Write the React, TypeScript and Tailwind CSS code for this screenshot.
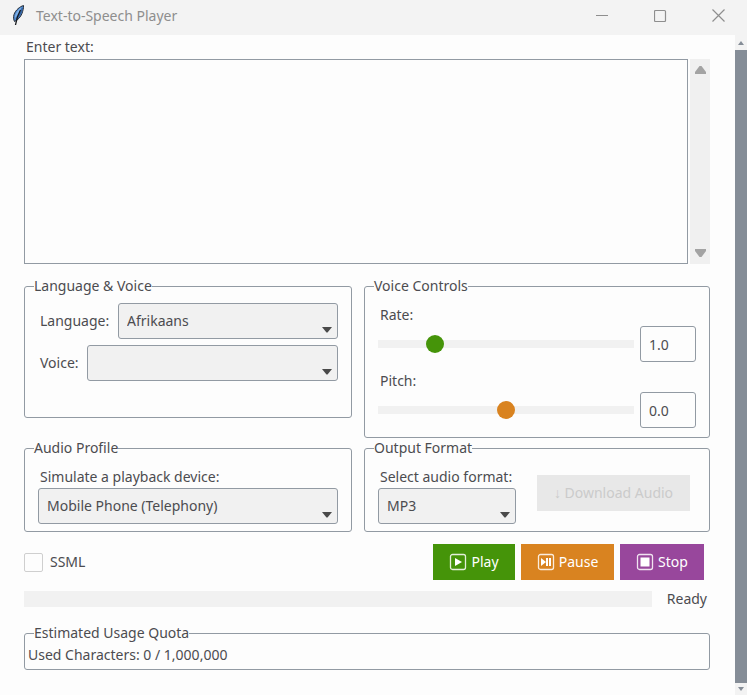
import React, { useState } from "react";

const FEATHER_VANE = "M11.500 0.500C8 1.500 3.500 5 2 9.500C1.200 12 1.500 14.500 2.500 16.500C6 15 8.500 12 10 8.500C11 5.500 11.700 3 11.500 0.500Z";

function Feather() {
  return (
    <svg width="13" height="21" viewBox="0 0 13 21" aria-hidden="true">
      <path d={FEATHER_VANE} fill="#4d86c9" stroke="#2a2f38" strokeWidth="1" />
      <path d="M9.500 2C6 4.500 4 7.500 3 11L3.500 13C5.500 9.500 8 6 9.500 2Z" fill="#7fb2ea" />
      <path d="M10.500 3C9.500 7 7.500 11 4.500 14.500" fill="none" stroke="#2f5f9f" strokeWidth="1.200" />
      <path d="M8.500 5C6.500 8.500 4.500 13 3.500 20" fill="none" stroke="#15181c" strokeWidth="1.300" />
    </svg>
  );
}

function Panel({ title, className = "", children }: { title: string; className?: string; children: React.ReactNode }) {
  return (
    <fieldset className={`min-w-0 rounded-[3px] border border-[#929aa3] px-[9px] ${className}`}>
      <legend className="h-5 leading-5">{title}</legend>
      {children}
    </fieldset>
  );
}

function Dropdown({ id, options, className = "" }: { id: string; options: string[]; className?: string }) {
  return (
    <div className={`relative ${className}`}>
      <select
        id={id}
        className="block h-9 w-full appearance-none rounded-[3px] border border-[#929aa3] bg-[#f1f1f1] pr-6 pl-2 outline-none"
      >
        {options.map((o) => (
          <option key={o}>{o}</option>
        ))}
      </select>
      <svg className="pointer-events-none absolute right-1.5 bottom-1.5" width="10" height="6" viewBox="0 0 10 6" aria-hidden="true">
        <path d="M0 0H10L5.500 5.500H4.500Z" fill="#4a4a4a" />
      </svg>
    </div>
  );
}

const TRACK =
  "h-[18px] min-w-0 flex-1 appearance-none bg-transparent [&::-webkit-slider-runnable-track]:h-2 [&::-webkit-slider-runnable-track]:bg-[#f1f1f1] [&::-webkit-slider-thumb]:-mt-[5px] [&::-webkit-slider-thumb]:size-[18px] [&::-webkit-slider-thumb]:appearance-none [&::-webkit-slider-thumb]:rounded-full";

function SliderRow(props: { id: string; label: string; min: number; max: number; step: number; initial: number; thumb: string }) {
  const [value, setValue] = useState(props.initial);
  return (
    <div className="pt-[9px]">
      <label htmlFor={props.id} className="block pl-0.5 leading-5">
        {props.label}
      </label>
      <div className="mt-px flex items-center gap-1.5">
        <input
          id={props.id}
          type="range"
          min={props.min}
          max={props.max}
          step={props.step}
          value={value}
          onChange={(e) => setValue(Number(e.target.value))}
          className={`${TRACK} ${props.thumb}`}
        />
        <input
          type="text"
          aria-label={`${props.label} value`}
          value={value.toFixed(1)}
          readOnly
          className="h-9 w-14 rounded-[3px] border border-[#929aa3] bg-[#fdfdfd] px-2 outline-none"
        />
      </div>
    </div>
  );
}

function MediaButton({ label, color, children }: { label: string; color: string; children: React.ReactNode }) {
  return (
    <button type="button" className={`flex h-9 items-center justify-center gap-1 text-white ${color}`}>
      <svg width="18" height="18" viewBox="0 0 18 18" fill="#fff" aria-hidden="true">
        <rect x="1.500" y="1.500" width="15" height="15" rx="2" fill="none" stroke="#fff" strokeOpacity="0.85" strokeWidth="1.300" />
        {children}
      </svg>
      {label}
    </button>
  );
}

export default function App() {
  return (
    <div className="flex min-h-screen flex-col bg-[#fdfdfd] font-['Noto_Sans',sans-serif] text-sm text-[#4c4c50]">
      <header className="flex h-[35px] items-center bg-[#f3f3f3] pl-3 text-[#8e8e8e]">
        <div className="-mt-1 flex flex-1 items-center gap-[11px]">
          <Feather />
          <h1>Text-to-Speech Player</h1>
        </div>
        <div className="-mt-1 flex">
          <button type="button" aria-label="Minimize" className="flex w-[58px] justify-center">
            <svg width="13" height="13" viewBox="0 0 13 13" fill="none" stroke="currentColor"><path d="M0 6.500H12" /></svg>
          </button>
          <button type="button" aria-label="Maximize" className="flex w-[58px] justify-center">
            <svg width="13" height="13" viewBox="0 0 13 13" fill="none" stroke="currentColor"><rect x="0.500" y="1.500" width="11" height="11" rx="1" strokeWidth="1.200" /></svg>
          </button>
          <button type="button" aria-label="Close" className="flex w-[58px] justify-center">
            <svg width="13" height="13" viewBox="0 0 13 13" fill="none" stroke="currentColor"><path d="M.5.5L12.500 12.500M12.500.5L.5 12.500" strokeWidth="1.200" /></svg>
          </button>
        </div>
      </header>

      <div className="flex flex-1">
        <main className="min-w-0 flex-1 pt-0.5 pr-[25px] pb-2 pl-6">
          <label htmlFor="text" className="block pl-0.5 leading-5">
            Enter text:
          </label>
          <div className="mt-0.5 flex h-[205px] gap-0.5">
            <textarea id="text" className="min-w-0 flex-1 resize-none border border-[#929aa3] bg-[#fdfdfd] p-1 outline-none" />
            <div className="flex w-5 flex-col items-center justify-between bg-[#f0f0f0] py-[7px]" aria-hidden="true">
              <svg width="11" height="8" viewBox="0 0 11 8"><path d="M4.500 0H6.500L11 6V8H0V6Z" fill="#a3a3a3" /></svg>
              <svg width="11" height="8" viewBox="0 0 11 8"><path d="M4.500 8H6.500L11 2V0H0V2Z" fill="#a3a3a3" /></svg>
            </div>
          </div>

          <div className="mt-3 grid grid-cols-[328fr_346fr] items-start gap-x-3">
            <Panel title="Language & Voice">
              <div className="mx-1 flex flex-col gap-1.5 pt-[7px] pb-9">
                <div className="flex items-center">
                  <label htmlFor="language" className="w-20 pl-0.5">Language:</label>
                  <Dropdown id="language" options={["Afrikaans"]} className="flex-1" />
                </div>
                <div className="flex items-center">
                  <label htmlFor="voice" className="w-[49px] pl-0.5">Voice:</label>
                  <Dropdown id="voice" options={[""]} className="flex-1" />
                </div>
              </div>
            </Panel>

            <Panel title="Voice Controls">
              <div className="mx-1 pb-[9px]">
                <SliderRow id="rate" label="Rate:" min={0.25} max={4} step={0.05} initial={1} thumb="[&::-webkit-slider-thumb]:bg-[#459409]" />
                <SliderRow id="pitch" label="Pitch:" min={-20} max={20} step={0.5} initial={0} thumb="[&::-webkit-slider-thumb]:bg-[#d98320]" />
              </div>
            </Panel>

            <Panel title="Audio Profile">
              <div className="mx-1 pt-[9px] pb-[7px]">
                <label htmlFor="profile" className="block pl-0.5 leading-5">Simulate a playback device:</label>
                <Dropdown id="profile" options={["Mobile Phone (Telephony)"]} className="mt-px" />
              </div>
            </Panel>

            <Panel title="Output Format">
              <div className="mx-1 flex items-start justify-between pt-[9px] pr-1.5 pb-[7px]">
                <div className="w-[138px]">
                  <label htmlFor="format" className="block pl-0.5 leading-5 whitespace-nowrap">Select audio format:</label>
                  <Dropdown id="format" options={["MP3"]} className="mt-px" />
                </div>
                <button type="button" disabled className="mt-2 h-9 w-[153px] bg-[#e8e8e8] text-[#cbcbcb]">
                  ↓ Download Audio
                </button>
              </div>
            </Panel>
          </div>

          <div className="mt-3 flex items-center gap-1.5 pr-1.5">
            <label className="flex flex-1 items-center gap-[7px]">
              <input type="checkbox" className="size-[19px] appearance-none rounded-[2px] border border-[#cfcfcf] bg-[#fdfdfd] checked:bg-[#459409]" />
              SSML
            </label>
            <MediaButton label="Play" color="bg-[#459409] w-[82px]">
              <path d="M6 5L13 9L6 13Z" />
            </MediaButton>
            <MediaButton label="Pause" color="bg-[#d98320] w-[93px]">
              <path d="M4 5L9 9L4 13ZM9 5H11V13H9ZM12 5H14V13H12Z" />
            </MediaButton>
            <MediaButton label="Stop" color="bg-[#98479c] w-[84px]">
              <rect x="4.500" y="4.500" width="9" height="9" />
            </MediaButton>
          </div>

          <div className="mt-[9px] flex items-center gap-[15px] pr-[3px]">
            <progress
              value={0}
              max={100}
              aria-label="Playback progress"
              className="h-4 min-w-0 flex-1 appearance-none [&::-webkit-progress-bar]:bg-[#f1f1f1] [&::-webkit-progress-value]:bg-[#459409]"
            />
            <output>Ready</output>
          </div>

          <Panel title="Estimated Usage Quota" className="mt-3.5">
            <p className="-ml-1.5 pt-0.5 pb-1 leading-5">Used Characters: 0 / 1,000,000</p>
          </Panel>
        </main>

        <div className="flex w-3 flex-col items-center bg-[#f3f3f3]" aria-hidden="true">
          <div className="flex h-[15px] items-center">
            <svg width="6" height="4" viewBox="0 0 6 4"><path d="M3 0L6 4H0Z" fill="#858d97" /></svg>
          </div>
          <div className="w-full flex-1 bg-[#858d97]" />
          <div className="flex h-3 items-center">
            <svg width="6" height="4" viewBox="0 0 6 4"><path d="M3 4L6 0H0Z" fill="#858d97" /></svg>
          </div>
        </div>
      </div>
    </div>
  );
}
